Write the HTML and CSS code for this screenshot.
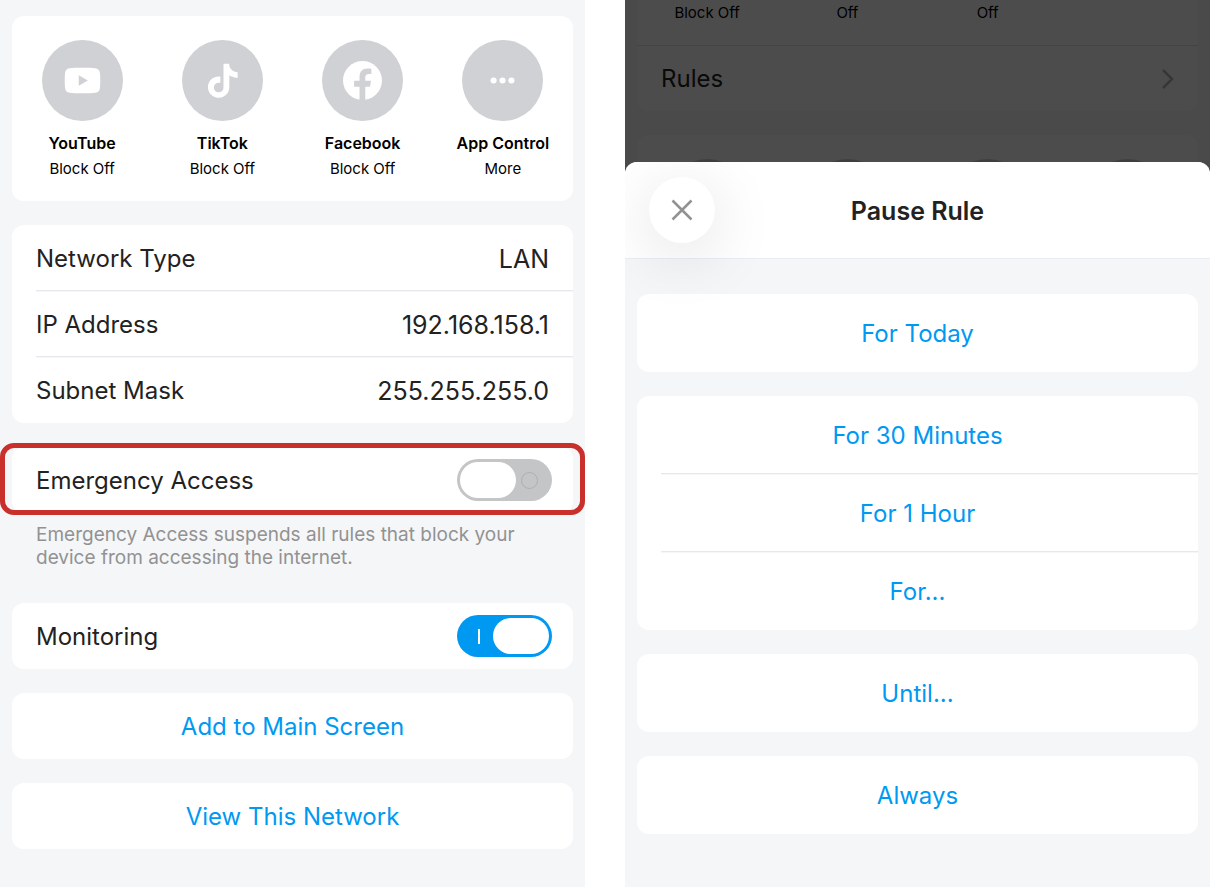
FILE: index.html
```html
<!DOCTYPE html>
<html lang="en">
<head>
<meta charset="utf-8">
<title>Device Settings</title>
<link rel="stylesheet" href="styles.css">
</head>
<body>
<div class="screens">
  <main class="screen">
    <section class="card apps">
      <button class="app" type="button">
        <svg class="app-icon" viewBox="0 0 82 82" aria-hidden="true">
          <circle class="disc" cx="41" cy="41" r="41"/>
          <path class="glyph" d="M41 28c-5.500 0-10 .1-13 .5-2.800.4-4.300 2-4.600 4.700C23.100 35.500 23 38 23 41s.1 5.500.4 7.800c.3 2.700 1.800 4.300 4.600 4.700 3 .4 7.500.5 13 .5s10-.1 13-.5c2.800-.4 4.300-2 4.600-4.700.3-2.300.4-4.800.4-7.800s-.1-5.500-.4-7.800c-.3-2.700-1.800-4.300-4.600-4.700-3-.4-7.500-.5-13-.5z"/>
          <path class="disc" d="M37.200 35.600v10.800l9.200-5.400z"/>
        </svg>
        <span class="app-name">YouTube</span>
        <span class="app-state">Block Off</span>
      </button>
      <button class="app" type="button">
        <svg class="app-icon" viewBox="0 0 82 82" aria-hidden="true">
          <circle class="disc" cx="41" cy="41" r="41"/>
          <path class="glyph" transform="translate(24 24) scale(1.440)" d="M12.525.02c1.310-.02 2.610-.01 3.910-.02.08 1.530.63 3.090 1.750 4.170 1.120 1.110 2.700 1.620 4.240 1.790v4.030c-1.440-.05-2.890-.35-4.200-.97-.57-.26-1.100-.59-1.620-.93-.01 2.920.01 5.840-.02 8.750-.08 1.400-.54 2.790-1.350 3.940-1.310 1.920-3.580 3.170-5.910 3.210-1.430.08-2.860-.31-4.080-1.030-2.020-1.190-3.440-3.370-3.650-5.710-.02-.5-.03-1-.01-1.490.18-1.900 1.120-3.720 2.580-4.960 1.660-1.440 3.980-2.130 6.150-1.720.02 1.480-.04 2.960-.04 4.440-.99-.32-2.150-.23-3.020.37-.63.41-1.110 1.040-1.360 1.750-.21.51-.15 1.070-.14 1.610.24 1.640 1.820 3.020 3.500 2.870 1.120-.01 2.190-.66 2.770-1.610.19-.33.4-.67.41-1.060.1-1.790.06-3.570.07-5.360.01-4.030-.01-8.050.02-12.070z"/>
        </svg>
        <span class="app-name">TikTok</span>
        <span class="app-state">Block Off</span>
      </button>
      <button class="app" type="button">
        <svg class="app-icon" viewBox="0 0 82 82" aria-hidden="true">
          <circle class="disc" cx="41" cy="41" r="41"/>
          <circle class="glyph" cx="41" cy="41" r="19.700"/>
          <path class="disc" d="M38 61V47.300h-5.500v-6H38v-3.800c0-5.600 3-8.600 8.200-8.600 1.500 0 2.700.1 3.800.3v5.100h-2.600c-2.600 0-3.600 1.300-3.600 3.400v3.600h5.800l-1 6h-4.800V61z"/>
        </svg>
        <span class="app-name">Facebook</span>
        <span class="app-state">Block Off</span>
      </button>
      <button class="app" type="button">
        <svg class="app-icon" viewBox="0 0 82 82" aria-hidden="true">
          <circle class="disc" cx="41" cy="41" r="41"/>
          <circle class="glyph" cx="32" cy="41" r="3.100"/>
          <circle class="glyph" cx="41" cy="41" r="3.100"/>
          <circle class="glyph" cx="50" cy="41" r="3.100"/>
        </svg>
        <span class="app-name">App Control</span>
        <span class="app-state">More</span>
      </button>
    </section>

    <dl class="card list">
      <div class="row"><dt>Network Type</dt><dd>LAN</dd></div>
      <div class="row"><dt>IP Address</dt><dd>192.168.158.1</dd></div>
      <div class="row"><dt>Subnet Mask</dt><dd>255.255.255.0</dd></div>
    </dl>

    <section class="group">
      <div class="card list highlighted">
        <div class="row">
          <label for="emergency">Emergency Access</label>
          <input class="toggle" type="checkbox" role="switch" id="emergency" aria-describedby="emergency-note">
        </div>
      </div>
      <p class="note" id="emergency-note">Emergency Access suspends all rules that block your device from accessing the internet.</p>
    </section>

    <div class="card list">
      <div class="row">
        <label for="monitoring">Monitoring</label>
        <input class="toggle" type="checkbox" role="switch" id="monitoring" checked>
      </div>
    </div>

    <button class="card action" type="button">Add to Main Screen</button>
    <button class="card action" type="button">View This Network</button>
  </main>

  <div class="screen-modal">
    <div class="backdrop">
      <section class="card card-tail">
        <div class="states">
          <span class="app-state">Block Off</span>
          <span class="app-state">Off</span>
          <span class="app-state">Off</span>
        </div>
        <a class="rules" href="#rules">Rules
          <svg class="chevron" viewBox="0 0 14 22" aria-hidden="true"><path d="M2 2l9 9-9 9"/></svg>
        </a>
      </section>
      <section class="card apps">
        <svg class="app-icon" viewBox="0 0 82 82" aria-hidden="true"><circle class="disc" cx="41" cy="41" r="41"/></svg>
        <svg class="app-icon" viewBox="0 0 82 82" aria-hidden="true"><circle class="disc" cx="41" cy="41" r="41"/></svg>
        <svg class="app-icon" viewBox="0 0 82 82" aria-hidden="true"><circle class="disc" cx="41" cy="41" r="41"/></svg>
        <svg class="app-icon" viewBox="0 0 82 82" aria-hidden="true"><circle class="disc" cx="41" cy="41" r="41"/></svg>
      </section>
    </div>

    <div class="sheet" role="dialog" aria-labelledby="sheet-title">
      <header class="sheet-header">
        <button class="close" type="button" aria-label="Close">
          <svg class="close-icon" viewBox="0 0 22 22" aria-hidden="true"><path d="M1.500 1.500l19 19M20.500 1.500l-19 19"/></svg>
        </button>
        <h1 class="sheet-title" id="sheet-title">Pause Rule</h1>
      </header>
      <div class="sheet-body">
        <div class="card options"><button class="option" type="button">For Today</button></div>
        <div class="card options">
          <button class="option" type="button">For 30 Minutes</button>
          <button class="option" type="button">For 1 Hour</button>
          <button class="option" type="button">For...</button>
        </div>
        <div class="card options"><button class="option" type="button">Until...</button></div>
        <div class="card options"><button class="option" type="button">Always</button></div>
      </div>
    </div>
  </div>
</div>
</body>
</html>
```
FILE: styles.css
```css
:root {
  --page: #f5f6f8;
  --line: #e6e8ed;
  --ink: #222;
  --blue: #0099f2;
  --disc: #d0d1d5;
}

* {
  box-sizing: border-box;
}

body {
  margin: 0;
  background: #fff;
  color: var(--ink);
  font-family: Inter, "Liberation Sans", sans-serif;
  font-size: 24px;
  line-height: 32px;
}

button {
  border: 0;
  padding: 0;
  background: none;
  color: inherit;
  font: inherit;
  cursor: pointer;
}

.screens {
  display: grid;
  grid-template-columns: 1fr 1fr;
  gap: 40px;
  min-height: 100vh;
}

.screen {
  display: flex;
  flex-direction: column;
  gap: 24px;
  padding: 16px 12px;
  background: var(--page);
}

.card {
  margin: 0;
  border-radius: 12px;
  background: #fff;
}

/* App shortcuts */
.apps {
  display: grid;
  grid-template-columns: repeat(4, 1fr);
  justify-items: center;
  padding: 24px 0 20px;
}

.app {
  display: flex;
  flex-direction: column;
  align-items: center;
  color: #000;
}

.app-icon {
  display: block;
  width: 81px;
  height: 81px;
}

.disc {
  fill: var(--disc);
}

.glyph {
  fill: #fff;
}

.app-name {
  margin-top: 9px;
  font-size: 16px;
  font-weight: 600;
  line-height: 26px;
}

.app-state {
  color: #000;
  font-size: 15px;
  line-height: 25px;
}

/* Setting rows */
.list {
  padding-left: 24px;
}

.row {
  display: flex;
  align-items: center;
  justify-content: space-between;
  height: 66px;
  padding-right: 24px;
}

.row + .row {
  box-shadow: 0 -1px 0 var(--line), inset 0 1px 0 var(--page);
}

.row:has(.toggle) {
  padding-right: 21px;
}

.row dt,
.row dd,
.row label {
  margin: 0;
  padding-top: 2px;
}

.row dd {
  font-size: 25px;
}

.highlighted {
  position: relative;
}

.highlighted::after {
  content: "";
  position: absolute;
  inset: -4px -12px -2px;
  border: 5px solid #c9302c;
  border-radius: 14px;
  pointer-events: none;
}

.note {
  margin: 10px 24px;
  color: #929292;
  font-size: 19px;
  line-height: 23px;
}

.toggle {
  display: flex;
  align-items: center;
  gap: 5px;
  width: 95px;
  height: 42px;
  margin: 0;
  padding: 3px;
  border-radius: 21px;
  background: #c4c5c7;
  appearance: none;
  cursor: pointer;
}

.toggle::before {
  content: "";
  width: 56px;
  height: 36px;
  border-radius: 18px;
  background: #fff;
}

.toggle::after {
  content: "";
  width: 15px;
  height: 15px;
  border: 1px solid #aeafb1;
  border-radius: 50%;
}

.toggle:checked {
  flex-direction: row-reverse;
  gap: 13px;
  background: var(--blue);
}

.toggle:checked::after {
  width: 2px;
  border: 0;
  border-radius: 0;
  background: #fff;
}

.action {
  height: 66px;
  padding-top: 2px;
  background: #fff;
  color: var(--blue);
}

/* Dimmed screen behind the sheet */
.screen-modal {
  display: flex;
  flex-direction: column;
  min-width: 0;
}

.backdrop {
  position: relative;
  display: flex;
  flex-direction: column;
  gap: 24px;
  height: 174px;
  padding: 0 12px;
  overflow: hidden;
  background: #f8f9fa;
}

.backdrop::after {
  content: "";
  position: absolute;
  inset: 0;
  background: rgba(0, 0, 0, 0.7);
}

.card-tail {
  border-radius: 0 0 12px 12px;
}

.states {
  display: grid;
  grid-template-columns: repeat(4, 1fr);
  justify-items: center;
  padding-bottom: 20px;
  border-bottom: 1px solid #e2e4e8;
}

.rules {
  display: flex;
  align-items: center;
  justify-content: space-between;
  height: 65px;
  padding: 0 23px 0 24px;
  color: var(--ink);
  text-decoration: none;
}

.chevron {
  width: 14px;
  height: 22px;
  fill: none;
  stroke: #b4b4b6;
  stroke-width: 2.500;
}

/* Bottom sheet */
.sheet {
  z-index: 1;
  flex: 1;
  margin-top: -12px;
  border-radius: 12px 12px 0 0;
  overflow: hidden;
  background: var(--page);
}

.sheet-header {
  position: relative;
  display: grid;
  grid-template-columns: 66px 1fr 66px;
  align-items: center;
  padding: 15px 24px;
  border-bottom: 1px solid #e9ecf2;
  background: #fff;
}

.close {
  display: grid;
  place-items: center;
  height: 66px;
  border-radius: 50%;
  background: #fff;
  box-shadow: 0 12px 64px rgba(0, 0, 0, 0.13);
}

.close-icon {
  width: 22px;
  height: 22px;
  fill: none;
  stroke: #929292;
  stroke-width: 2.500;
}

.sheet-title {
  margin: 0;
  padding-top: 2px;
  font-size: 25px;
  font-weight: 600;
  text-align: center;
}

.sheet-body {
  display: flex;
  flex-direction: column;
  gap: 24px;
  padding: 35px 12px;
}

.options {
  display: flex;
  flex-direction: column;
}

.option {
  height: 78px;
  padding-top: 2px;
  color: var(--blue);
}

.option + .option {
  margin-left: 24px;
  padding-right: 24px;
  box-shadow: 0 -1px 0 var(--line), inset 0 1px 0 var(--page);
}
```
